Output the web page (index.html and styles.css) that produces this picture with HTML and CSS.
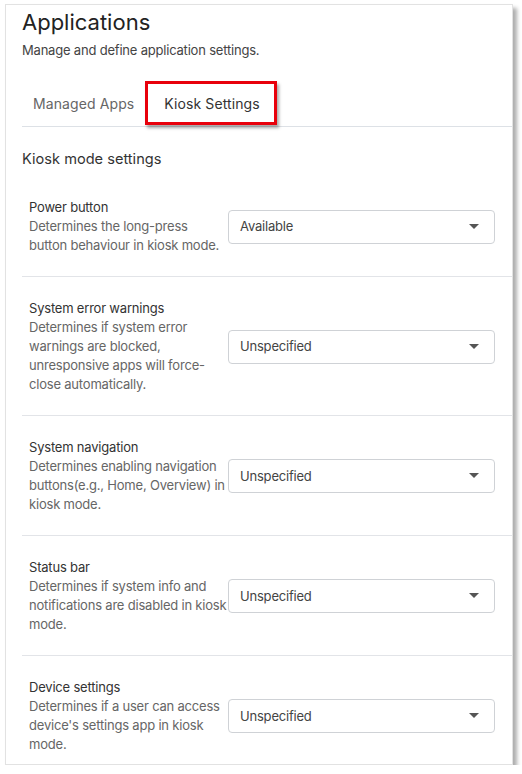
FILE: index.html
```html
<!DOCTYPE html>
<html lang="en">
<head>
<meta charset="utf-8">
<title>Applications</title>
<link rel="stylesheet" href="styles.css">
</head>
<body>
<div class="card">
  <h1 class="title">Applications</h1>
  <p class="subtitle">Manage and define application settings.</p>
  <div class="tabs">
    <div class="tab">Managed Apps</div>
    <div class="tab tab-active">Kiosk Settings<span class="highlight"></span></div>
  </div>
  <h2 class="section">Kiosk mode settings</h2>

  <div class="row">
    <div class="label">
      <div class="label-title">Power button</div>
      <div class="label-desc">Determines the long-press button behaviour in kiosk mode.</div>
    </div>
    <div class="select"><span>Available</span><span class="caret"></span></div>
  </div>

  <div class="row">
    <div class="label">
      <div class="label-title">System error warnings</div>
      <div class="label-desc">Determines if system error warnings are blocked, unresponsive apps will force-close automatically.</div>
    </div>
    <div class="select"><span>Unspecified</span><span class="caret"></span></div>
  </div>

  <div class="row">
    <div class="label">
      <div class="label-title">System navigation</div>
      <div class="label-desc">Determines enabling navigation buttons(e.g., Home, Overview) in kiosk mode.</div>
    </div>
    <div class="select"><span>Unspecified</span><span class="caret"></span></div>
  </div>

  <div class="row">
    <div class="label">
      <div class="label-title">Status bar</div>
      <div class="label-desc">Determines if system info and notifications are disabled in kiosk mode.</div>
    </div>
    <div class="select"><span>Unspecified</span><span class="caret"></span></div>
  </div>

  <div class="row">
    <div class="label">
      <div class="label-title">Device settings</div>
      <div class="label-desc">Determines if a user can access device's settings app in kiosk mode.</div>
    </div>
    <div class="select"><span>Unspecified</span><span class="caret"></span></div>
  </div>
</div>
</body>
</html>
```

FILE: styles.css
```css
html, body {
  margin: 0;
  padding: 0;
  background: #ffffff;
}
body {
  font-family: Inter, "Noto Sans", sans-serif;
  color: #333;
}
.card {
  box-sizing: border-box;
  margin: 4px 0 0 5px;
  width: 508px;
  height: 761px;
  overflow: hidden;
  background: #fff;
  border: 1px solid #e2e2e2;
  box-shadow: 4px 4px 4px rgba(0, 0, 0, 0.32);
  padding: 3px 0 0 16px;
}
.title {
  margin: 0;
  font-size: 22px;
  line-height: 28px;
  font-weight: 400;
  color: #222;
}
.subtitle {
  margin: 5px 0 0;
  font-size: 13px;
  line-height: 18px;
  letter-spacing: -0.2px;
  color: #444;
}
.tabs {
  display: flex;
  gap: 8px;
  margin-top: 19px;
  border-bottom: 1px solid #dde1e6;
}
.tab {
  position: relative;
  padding: 16px 11px 12px;
  font-size: 14px;
  line-height: 20px;
  color: #666;
  letter-spacing: 0.1px;
}
.tab-active {
  color: #333;
}
.highlight {
  position: absolute;
  left: -8px;
  top: 3px;
  width: 132px;
  height: 44px;
  box-sizing: border-box;
  border: 3px solid #e8000b;
  box-shadow: 2px 3px 3px rgba(0, 0, 0, 0.35);
}
.section {
  margin: 22px 0 7px;
  font-size: 14.6px;
  line-height: 20px;
  font-weight: 400;
  color: #333;
}
.row {
  display: flex;
  align-items: center;
  padding: 22px 17px 21px 7px;
  border-bottom: 1px solid #e2e4e8;
}
.row:last-child {
  border-bottom: none;
}
.label {
  width: 199px;
  flex: none;
  font-size: 13px;
  line-height: 19px;
  letter-spacing: -0.2px;
}
.label-title {
  color: #333;
}
.label-desc {
  color: #666;
}
.select {
  flex: 1;
  box-sizing: border-box;
  height: 34px;
  display: flex;
  align-items: center;
  justify-content: space-between;
  padding: 0 15px 1px 11px;
  border: 1px solid #cfd2d6;
  border-radius: 4px;
  font-size: 13px;
  letter-spacing: -0.2px;
  color: #444;
}
.caret {
  width: 0;
  height: 0;
  border-left: 5px solid transparent;
  border-right: 5px solid transparent;
  border-top: 5px solid #555;
}
```
